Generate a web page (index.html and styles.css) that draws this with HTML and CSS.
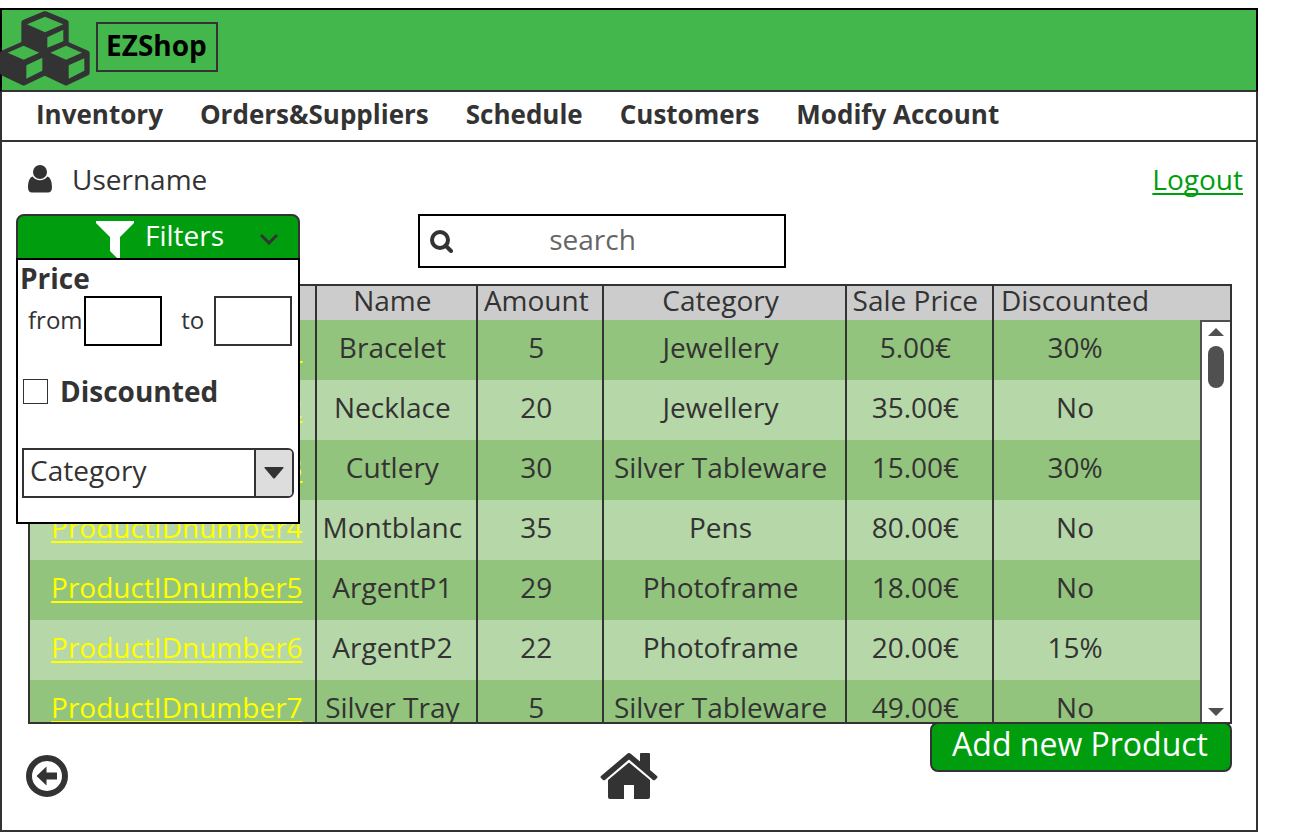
FILE: index.html
```html
<!DOCTYPE html>
<html lang="en">
<head>
<meta charset="utf-8">
<meta name="viewport" content="width=device-width, initial-scale=1">
<title>EZShop Inventory</title>
<link rel="stylesheet" href="styles.css">
</head>
<body>
<div class="app">
  <header class="banner">
    <svg class="logo" viewBox="0 34 270 224" aria-hidden="true">
      <g class="logo-cube">
        <path d="M135 42L198 68V134L135 165L72 134V68Z"/>
        <path d="M71 132L134 160V219L71 249L8 219V160Z"/>
        <path d="M198 132L261 160V219L198 249L135 219V160Z"/>
      </g>
      <g class="logo-face">
        <path d="M81 73L135 51L190 73L135 97Z"/>
        <path d="M142 112L190 90V124L142 144Z"/>
        <path d="M23 159L71 138L118 159L71 180Z"/>
        <path d="M79 196L127 174V213L79 237Z"/>
        <path d="M151 159L198 138L246 159L198 180Z"/>
        <path d="M206 196L253 175V213L206 237Z"/>
      </g>
    </svg>
    <h1 class="brand">EZShop</h1>
  </header>
  <div class="body">
    <nav class="menu">
      <a href="#">Inventory</a>
      <a href="#">Orders&amp;Suppliers</a>
      <a href="#">Schedule</a>
      <a href="#">Customers</a>
      <a href="#">Modify Account</a>
    </nav>
    <div class="account">
      <svg class="user-icon" viewBox="0 0 24 28" aria-hidden="true">
        <circle cx="12" cy="7" r="7"/>
        <path d="M4.600 11.500C1.500 12.500 0 17 0 22.500C0 25.500 1.500 27.500 4 27.500H20C22.500 27.500 24 25.500 24 22.500C24 17 22.500 12.500 19.400 11.500C17.500 14 15 15.200 12 15.200S6.500 14 4.600 11.500Z"/>
      </svg>
      <span>Username</span>
      <a class="logout" href="#">Logout</a>
    </div>
    <div class="tools">
      <div class="filters">
        <button class="filters-toggle" type="button">
          <svg class="funnel" viewBox="0 0 38 37" aria-hidden="true"><path d="M0 0H38V2L24 16V37H21L14 30V16L0 2Z"/></svg>
          <span>Filters</span>
          <svg class="chevron" viewBox="0 0 18 12" aria-hidden="true"><path d="M1 2L9 10L17 2"/></svg>
        </button>
        <form class="filters-panel">
          <div class="filter-title">Price</div>
          <div class="price-row">
            <label for="from">from</label>
            <input class="price price-from" id="from" type="text">
            <label class="label-to" for="to">to</label>
            <input class="price" id="to" type="text">
          </div>
          <label class="check"><input type="checkbox"><span>Discounted</span></label>
          <div class="select-box">
            <select aria-label="Category"><option>Category</option></select>
            <span class="select-arrow"><svg viewBox="0 0 20 12" aria-hidden="true"><path d="M1 0H19Q20 .5 19.500 1L11 11Q10 12 9 11L.5 1Q0 .5 1 0Z"/></svg></span>
          </div>
        </form>
      </div>
      <label class="search">
        <svg viewBox="0 0 23 23" aria-hidden="true"><circle cx="10" cy="10" r="8"/><path d="M15.500 15.500L21 21"/></svg>
        <input type="text" placeholder="search" aria-label="search">
      </label>
    </div>
    <div class="products">
      <table>
        <colgroup><col class="c-id"><col class="c-name"><col class="c-amount"><col class="c-category"><col class="c-price"><col class="c-discount"></colgroup>
        <thead>
          <tr><th></th><th>Name</th><th>Amount</th><th>Category</th><th>Sale Price</th><th>Discounted</th></tr>
        </thead>
        <tbody>
          <tr><td><a href="#">ProductIDnumber1</a></td><td>Bracelet</td><td>5</td><td>Jewellery</td><td>5.00€</td><td>30%</td></tr>
          <tr><td><a href="#">ProductIDnumber2</a></td><td>Necklace</td><td>20</td><td>Jewellery</td><td>35.00€</td><td>No</td></tr>
          <tr><td><a href="#">ProductIDnumber3</a></td><td>Cutlery</td><td>30</td><td>Silver Tableware</td><td>15.00€</td><td>30%</td></tr>
          <tr><td><a href="#">ProductIDnumber4</a></td><td>Montblanc</td><td>35</td><td>Pens</td><td>80.00€</td><td>No</td></tr>
          <tr><td><a href="#">ProductIDnumber5</a></td><td>ArgentP1</td><td>29</td><td>Photoframe</td><td>18.00€</td><td>No</td></tr>
          <tr><td><a href="#">ProductIDnumber6</a></td><td>ArgentP2</td><td>22</td><td>Photoframe</td><td>20.00€</td><td>15%</td></tr>
          <tr><td><a href="#">ProductIDnumber7</a></td><td>Silver Tray</td><td>5</td><td>Silver Tableware</td><td>49.00€</td><td>No</td></tr>
        </tbody>
      </table>
      <div class="scrollbar" aria-hidden="true">
        <svg viewBox="0 0 16 8"><path d="M0 8L8 0L16 8Z"/></svg>
        <span class="thumb"></span>
        <svg class="down" viewBox="0 0 16 8"><path d="M0 0L8 8L16 0Z"/></svg>
      </div>
    </div>
    <footer class="actions">
      <button class="icon-button" type="button" aria-label="Back">
        <svg class="back" viewBox="0 0 42 42" aria-hidden="true"><circle cx="21" cy="21" r="18"/><path d="M10.500 21L20.500 11.500V17.500H31V24.500H20.500V30.500Z"/></svg>
      </button>
      <button class="icon-button" type="button" aria-label="Home">
        <svg class="home" viewBox="0 0 58 46" aria-hidden="true">
          <path d="M8 27L29 9.500L50 27V44Q50 46 48 46H34V32H24V46H10Q8 46 8 44Z"/>
          <path d="M27 1Q29-1 31 1L40 8.500V1Q40 0 41 0H49Q50 0 50 1V17L57 23Q58 24 57 25L55 27Q54 27.500 53 27L29 6.500L5 27Q4 27.500 3 27L1 25Q0 24 1 23Z"/>
        </svg>
      </button>
      <button class="add" type="button">Add new Product</button>
    </footer>
  </div>
</div>
</body>
</html>
```
FILE: styles.css
```css
* {
  box-sizing: border-box;
}

body {
  margin: 8px 54px 0 0;
  background: #fff;
  color: #333;
  font: 28px/38px "Open Sans", "Noto Sans", sans-serif;
}

button,
input,
select {
  margin: 0;
  color: inherit;
  font: inherit;
}

svg {
  display: block;
  flex: none;
  fill: currentColor;
}

.banner {
  display: flex;
  align-items: flex-start;
  gap: 6px;
  height: 84px;
  border: 2px solid #000;
  border-bottom-color: #333;
  background: #43b74b;
}

.logo {
  width: 90px;
  height: 75px;
  margin: 1px 0 0 -2px;
}

.logo-cube {
  stroke: #333;
  stroke-width: 16px;
  stroke-linejoin: round;
}

.logo-face {
  fill: #43b74b;
}

.brand {
  margin: 12px 0 0;
  padding: 2px 9px 6px 8px;
  border: 2px solid #333;
  color: #000;
  font-size: 28px;
  line-height: 38px;
}

.body {
  border: 2px solid #333;
  border-top: 0;
}

.menu {
  display: flex;
  gap: 37px;
  padding: 4px 34px 8px;
  border-bottom: 2px solid #333;
  font-size: 26px;
  font-weight: 700;
  line-height: 36px;
}

.menu a {
  color: inherit;
  text-decoration: none;
}

.account {
  display: flex;
  align-items: center;
  gap: 20px;
  padding: 18px 13px 16px 26px;
}

.user-icon {
  width: 24px;
  height: 28px;
}

.logout {
  margin-left: auto;
  color: #009e0f;
}

.logout,
td a {
  text-decoration-thickness: 2px;
  text-decoration-skip-ink: none;
  text-underline-offset: 3px;
}

.tools {
  display: flex;
  align-items: flex-start;
  gap: 118px;
  padding: 0 14px 16px;
}

.filters {
  position: relative;
  width: 284px;
}

.filters-toggle {
  display: flex;
  width: 100%;
  height: 46px;
  padding: 0 20px 0 78px;
  border: 2px solid #333;
  border-radius: 8px 8px 0 0;
  background: #009e0f;
  color: #fff;
}

.funnel {
  width: 38px;
  height: 37px;
  margin: 5px 11px 0 0;
}

.chevron {
  width: 18px;
  height: 12px;
  margin: 17px 0 0 auto;
  fill: none;
  stroke: #333;
  stroke-width: 3px;
}

.filters-panel {
  position: absolute;
  top: 44px;
  left: 0;
  z-index: 1;
  width: 100%;
  padding: 0 4px 24px;
  border: 2px solid #000;
  background: #fff;
}

.filter-title {
  margin-left: -2px;
  font-weight: 700;
  line-height: 36px;
}

.price-row {
  display: flex;
  align-items: center;
  padding: 0 2px 0 6px;
  font-size: 24px;
}

.price-row label {
  padding-bottom: 2px;
}

.price-row .label-to {
  margin: 0 auto;
}

.price {
  width: 78px;
  height: 50px;
  padding: 0 6px;
  border: 2px solid #333;
}

.price-from {
  margin-left: 1px;
  margin-right: 10px;
  border-color: #000;
}

.check {
  display: flex;
  align-items: center;
  gap: 12px;
  margin: 25px 0 37px;
  font-weight: 700;
  line-height: 40px;
}

.check input {
  width: 25px;
  height: 25px;
  margin-left: 1px;
  appearance: none;
  border: 1px solid #333;
}

.select-box {
  position: relative;
}

.select-box select {
  width: 100%;
  height: 50px;
  padding: 0 46px 6px 6px;
  appearance: none;
  border: 2px solid #333;
  border-radius: 0 6px 6px 0;
  background: #fff;
}

.select-arrow {
  position: absolute;
  top: 2px;
  right: 2px;
  bottom: 2px;
  display: grid;
  place-items: center;
  width: 38px;
  border-left: 2px solid #333;
  border-radius: 0 4px 4px 0;
  background: #ddd;
  pointer-events: none;
}

.select-arrow svg {
  width: 20px;
  height: 12px;
}

.search {
  display: flex;
  align-items: center;
  width: 368px;
  height: 54px;
  padding: 0 52px 0 10px;
  border: 2px solid #000;
}

.search svg {
  width: 23px;
  height: 23px;
  fill: none;
  stroke: #333;
  stroke-width: 4px;
  stroke-linecap: round;
}

.search input {
  flex: 1;
  min-width: 0;
  height: 50px;
  padding: 0 0 4px;
  border: 0;
  outline: 0;
  background: none;
  text-align: center;
}

.search input::placeholder {
  color: #666;
  opacity: 1;
}

.products {
  display: grid;
  grid-template-columns: 1fr 30px;
  max-height: 440px;
  margin: 0 24px 0 26px;
  overflow: hidden;
  border: 2px solid #333;
  background: #ccc;
}

table {
  width: 100%;
  border-spacing: 0;
  table-layout: fixed;
  text-align: center;
  white-space: nowrap;
}

.c-id { width: 24.5%; }
.c-name { width: 13.8%; }
.c-amount { width: 10.8%; }
.c-category { width: 20.7%; }
.c-price { width: 12.6%; }

th,
td {
  padding: 0 8px 6px 0;
  border-right: 2px solid #333;
}

th {
  font-weight: 400;
  line-height: 28px;
}

td {
  line-height: 54px;
}

td:first-child {
  padding-right: 0;
  padding-left: 9px;
}

th:last-child,
td:last-child {
  padding-right: 44px;
  border-right: 0;
}

tbody tr:nth-child(odd) { background: #93c47d; }
tbody tr:nth-child(even) { background: #b6d7a8; }

td a {
  color: #ff0;
}

.scrollbar {
  display: flex;
  flex-direction: column;
  align-items: center;
  height: 402px;
  margin-top: 34px;
  padding: 6px 0;
  border-top: 2px solid #505050;
  border-left: 2px solid #505050;
  background: #fff;
  color: #505050;
}

.scrollbar svg {
  width: 16px;
  height: 8px;
}

.thumb {
  width: 16px;
  height: 42px;
  margin-top: 10px;
  border-radius: 8px;
  background: #505050;
}

.scrollbar .down {
  margin-top: auto;
}

.actions {
  display: grid;
  grid-template-columns: 1fr auto 1fr;
  align-items: center;
  min-height: 106px;
  padding: 0 24px;
}

.icon-button {
  justify-self: start;
  padding: 0 0 2px;
  border: 0;
  background: none;
}

.back {
  width: 42px;
  height: 42px;
}

.back circle {
  fill: none;
  stroke: #333;
  stroke-width: 6px;
}

.home {
  width: 58px;
  height: 46px;
}

.add {
  align-self: start;
  justify-self: end;
  height: 50px;
  margin-top: -2px;
  padding: 0 22px 6px 20px;
  border: 2px solid #333;
  border-radius: 8px;
  background: #009e0f;
  color: #fff;
  font-size: 32px;
  line-height: 40px;
}
```
